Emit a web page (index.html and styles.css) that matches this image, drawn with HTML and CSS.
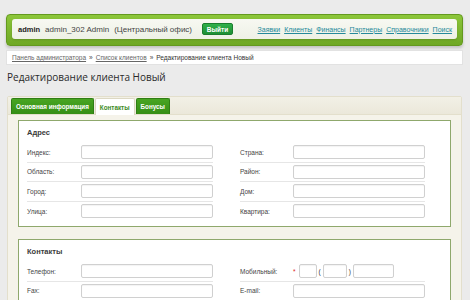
FILE: index.html
```html
<!DOCTYPE html>
<html lang="ru">
<head>
  <meta charset="utf-8" />
  <title>Редактирование клиента Новый</title>
  <link rel="stylesheet" href="styles.css">
</head>
<body>
  <header class="top">
    <div class="top-inner">
      <div class="user">
        <b>admin</b>
        <span>admin_302 Admin</span>
        <span>(Центральный офис)</span>
        <a class="logout" href="#">Выйти</a>
      </div>
      <nav class="nav">
        <a href="#">Заявки</a>
        <a href="#">Клиенты</a>
        <a href="#">Финансы</a>
        <a href="#">Партнеры</a>
        <a href="#">Справочники</a>
        <a href="#">Поиск</a>
      </nav>
    </div>
  </header>

  <div class="crumbs">
    <a href="#">Панель администратора</a> » <a href="#">Список клиентов</a> » <span>Редактирование клиента Новый</span>
  </div>

  <h1 class="title">Редактирование клиента Новый</h1>

  <section class="tabs-box">
    <div class="tabbar">
      <a class="tab" href="#">Основная информация</a>
      <a class="tab active" href="#">Контакты</a>
      <a class="tab" href="#">Бонусы</a>
    </div>

    <div class="group">
      <div class="legend">Адрес</div>
      <div class="grid">
        <div class="row"><label>Индекс:</label><input type="text"></div>
        <div class="row"><label>Страна:</label><input type="text"></div>
        <div class="row"><label>Область:</label><input type="text"></div>
        <div class="row"><label>Район:</label><input type="text"></div>
        <div class="row"><label>Город:</label><input type="text"></div>
        <div class="row"><label>Дом:</label><input type="text"></div>
        <div class="row last"><label>Улица:</label><input type="text"></div>
        <div class="row last"><label>Квартира:</label><input type="text"></div>
      </div>
    </div>

    <div class="group">
      <div class="legend">Контакты</div>
      <div class="grid">
        <div class="row"><label>Телефон:</label><input type="text"></div>
        <div class="row">
          <label>Мобильный:</label>
          <div class="phone">
            <span class="req">*</span>
            <input class="p1" type="text">
            <span>(</span>
            <input class="p2" type="text">
            <span>)</span>
            <input class="p3" type="text">
          </div>
        </div>
        <div class="row"><label>Fax:</label><input type="text"></div>
        <div class="row"><label>E-mail:</label><input type="text"></div>
      </div>
    </div>
  </section>
</body>
</html>
```

FILE: styles.css
```css
* { box-sizing: border-box; }
html, body { margin: 0; }
body {
  background: #ebebeb;
  font-family: "Liberation Sans", Arial, sans-serif;
  color: #333;
  font-size: 7px;
  overflow: hidden;
}

.top {
  margin: 14px 7px 0 6px;
  padding: 4px 5px 6px;
  background: linear-gradient(180deg, #8cc63a, #6fa825);
  border: 1px solid #64991f;
  border-radius: 4px;
  box-shadow: 0 2px 3px rgba(0,0,0,0.18);
}
.top-inner {
  display: flex; align-items: center; justify-content: space-between;
  height: 20px;
  padding: 0 5px 0 6px;
  background: linear-gradient(180deg, #f7f8f2, #eef1e6);
  border-radius: 3px;
  box-shadow: 0 1px 2px rgba(0,0,0,0.15);
}
.user { display: flex; align-items: center; gap: 5px; color: #444; font-size: 8px; }
.user b { color: #222; font-size: 7.5px; }
.logout {
  margin-left: 5px;
  width: 31px; height: 12px;
  display: grid; place-items: center;
  background: linear-gradient(180deg, #2fb04a, #1e8f35);
  border: 1px solid #1b7d2e;
  border-radius: 2px;
  color: #fff; font-weight: bold; font-size: 6.5px;
  text-decoration: none;
}
.nav { display: flex; gap: 4px; }
.nav a { color: #25899a; font-size: 7px; }

.crumbs {
  margin: 4px 7px 0 6px;
  height: 15px;
  padding: 0 5px;
  display: flex; align-items: center; gap: 3px;
  background: #fff;
  border: 1px solid #e2e2e2;
  font-size: 6.5px;
  color: #444;
}
.crumbs a { color: #666; }
.crumbs span { color: #333; }

.title {
  margin: 0 7px;
  height: 24px;
  line-height: 24px;
  font-family: "Open Sans", sans-serif;
  font-size: 10px;
  font-weight: normal;
  color: #2a2a2a;
}

.tabs-box {
  margin: 7px 8px 0 7px;
  padding: 0 2px 40px;
  background: #f5f3ea;
  border: 1px solid #e3dfcc;
  border-radius: 2px;
}
.tabbar {
  display: flex; align-items: flex-end; gap: 1px;
  height: 18px;
  margin: 0 -2px;
  padding: 0 2px;
  background: linear-gradient(180deg, #f2f0e6, #ebe8da);
  border-bottom: 1px solid #e3dfcc;
}
.tab {
  height: 16px;
  padding: 0 4px;
  display: flex; align-items: center;
  background: linear-gradient(180deg, #48a522, #358e16);
  border: 1px solid #2f7e14;
  border-bottom: 0;
  border-radius: 2px 2px 0 0;
  color: #fff; font-weight: bold; font-size: 6.3px;
  text-decoration: none;
}
.tab.active {
  background: #fff;
  color: #3a8a1c;
  border-color: #dcd8c4;
  margin-bottom: -1px;
  height: 17px;
}
.tab:first-child { margin-left: 1px; }

.group {
  margin: 5px 8px 0 8px;
  padding: 7px 27px 5px 8px;
  background: #fff;
  border: 1px solid #8fa86c;
}
.group + .group { margin-top: 12px; }
.legend {
  height: 10px; line-height: 10px;
  font-weight: bold; font-size: 7.5px;
  color: #3a3a3a;
  margin-bottom: 5px;
}
.grid {
  display: grid;
  grid-template-columns: 186px 185px;
  column-gap: 27px;
}
.row {
  display: flex; align-items: center;
  height: 19.5px;
  border-bottom: 1px solid #e6e6e6;
}
.row.last { border-bottom: 0; }
.row label { width: 54px; font-size: 6.5px; color: #444; }
.row input {
  width: 132px; height: 14px;
  border: 1px solid #d0d0d0;
  border-radius: 2px;
  background: #fff;
  box-shadow: inset 0 1px 1px rgba(0,0,0,0.05);
  padding: 0;
}
.group .grid .row:nth-child(2n) label { width: 53px; }
.phone { display: flex; align-items: center; gap: 2px; font-size: 6.5px; }
.phone .req { color: #d22; margin-right: 1px; }
.row .phone input.p1 { width: 18px; }
.row .phone input.p2 { width: 24px; }
.row .phone input.p3 { width: 41px; }
```
